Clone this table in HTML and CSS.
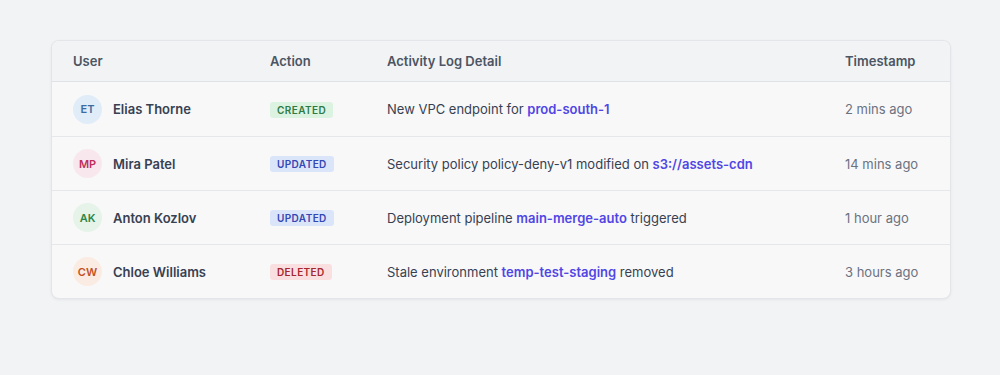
FILE: index.html
```html
<!DOCTYPE html>
<html lang="en">
<head>
    <meta charset="UTF-8">
    <meta name="viewport" content="width=device-width, initial-scale=1.0">
    <title>Activity Log</title>
    <link rel="stylesheet" href="styles.css">
</head>
<body>
    <div class="card">
        <div class="row head">
            <div class="cell">User</div>
            <div class="cell">Action</div>
            <div class="cell">Activity Log Detail</div>
            <div class="cell">Timestamp</div>
        </div>
        <div class="row">
            <div class="cell user">
                <span class="avatar blue">ET</span>
                <span class="name">Elias Thorne</span>
            </div>
            <div class="cell"><span class="badge created">Created</span></div>
            <div class="cell detail">New VPC endpoint for <a href="#">prod-south-1</a></div>
            <div class="cell time">2 mins ago</div>
        </div>
        <div class="row">
            <div class="cell user">
                <span class="avatar pink">MP</span>
                <span class="name">Mira Patel</span>
            </div>
            <div class="cell"><span class="badge updated">Updated</span></div>
            <div class="cell detail">Security policy policy-deny-v1 modified on <a href="#">s3://assets-cdn</a></div>
            <div class="cell time">14 mins ago</div>
        </div>
        <div class="row">
            <div class="cell user">
                <span class="avatar green">AK</span>
                <span class="name">Anton Kozlov</span>
            </div>
            <div class="cell"><span class="badge updated">Updated</span></div>
            <div class="cell detail">Deployment pipeline <a href="#">main-merge-auto</a> triggered</div>
            <div class="cell time">1 hour ago</div>
        </div>
        <div class="row">
            <div class="cell user">
                <span class="avatar orange">CW</span>
                <span class="name">Chloe Williams</span>
            </div>
            <div class="cell"><span class="badge deleted">Deleted</span></div>
            <div class="cell detail">Stale environment <a href="#">temp-test-staging</a> removed</div>
            <div class="cell time">3 hours ago</div>
        </div>
    </div>
</body>
</html>
```

FILE: styles.css
```css
* {
    margin: 0;
    padding: 0;
    box-sizing: border-box;
    font-family: "Inter", "Liberation Sans", sans-serif;
}
body {
    background: #f2f3f5;
    padding: 40px 0 0 51px;
    min-height: 375px;
}
.card {
    width: 900px;
    background: #f8f8f9;
    border: 1px solid #e3e5e9;
    border-radius: 8px;
    box-shadow: 0 1px 3px rgba(15, 23, 42, 0.06);
    overflow: hidden;
}
.row {
    display: grid;
    grid-template-columns: 197px 117px 458px 126px;
    align-items: center;
    height: 54px;
    border-top: 1px solid #e5e7eb;
    font-size: 13px;
    color: #374151;
}
.row.head {
    height: 41px;
    border-top: none;
    border-bottom: 1px solid #dfe2e7;
    background: #f2f3f5;
    font-weight: 600;
    color: #4b5563;
}
.row.head + .row {
    border-top: none;
}
.cell {
    padding-left: 21px;
    white-space: nowrap;
}
.user {
    display: flex;
    align-items: center;
    gap: 11px;
}
.avatar {
    display: flex;
    align-items: center;
    justify-content: center;
    width: 29px;
    height: 29px;
    border-radius: 50%;
    font-size: 11px;
    font-weight: 600;
}
.avatar.blue { background: #e0ecf8; color: #3d6b9f; }
.avatar.pink { background: #f8e7ed; color: #be2d5b; }
.avatar.green { background: #e5f3e8; color: #2f8745; }
.avatar.orange { background: #faece2; color: #c2511e; }
.name {
    font-weight: 600;
    color: #374151;
}
.badge {
    display: inline-block;
    padding: 2px 7px;
    border-radius: 3px;
    font-size: 10px;
    font-weight: 600;
    letter-spacing: 0.4px;
    text-transform: uppercase;
    line-height: 12px;
}
.badge.created { background: #dcf3e2; color: #2f7a45; }
.badge.updated { background: #dbe5f9; color: #3447b5; }
.badge.deleted { background: #f9dfe0; color: #a5282c; }
.detail a {
    color: #5046e5;
    font-weight: 600;
    text-decoration: none;
}
.time {
    color: #6b7280;
}
```
